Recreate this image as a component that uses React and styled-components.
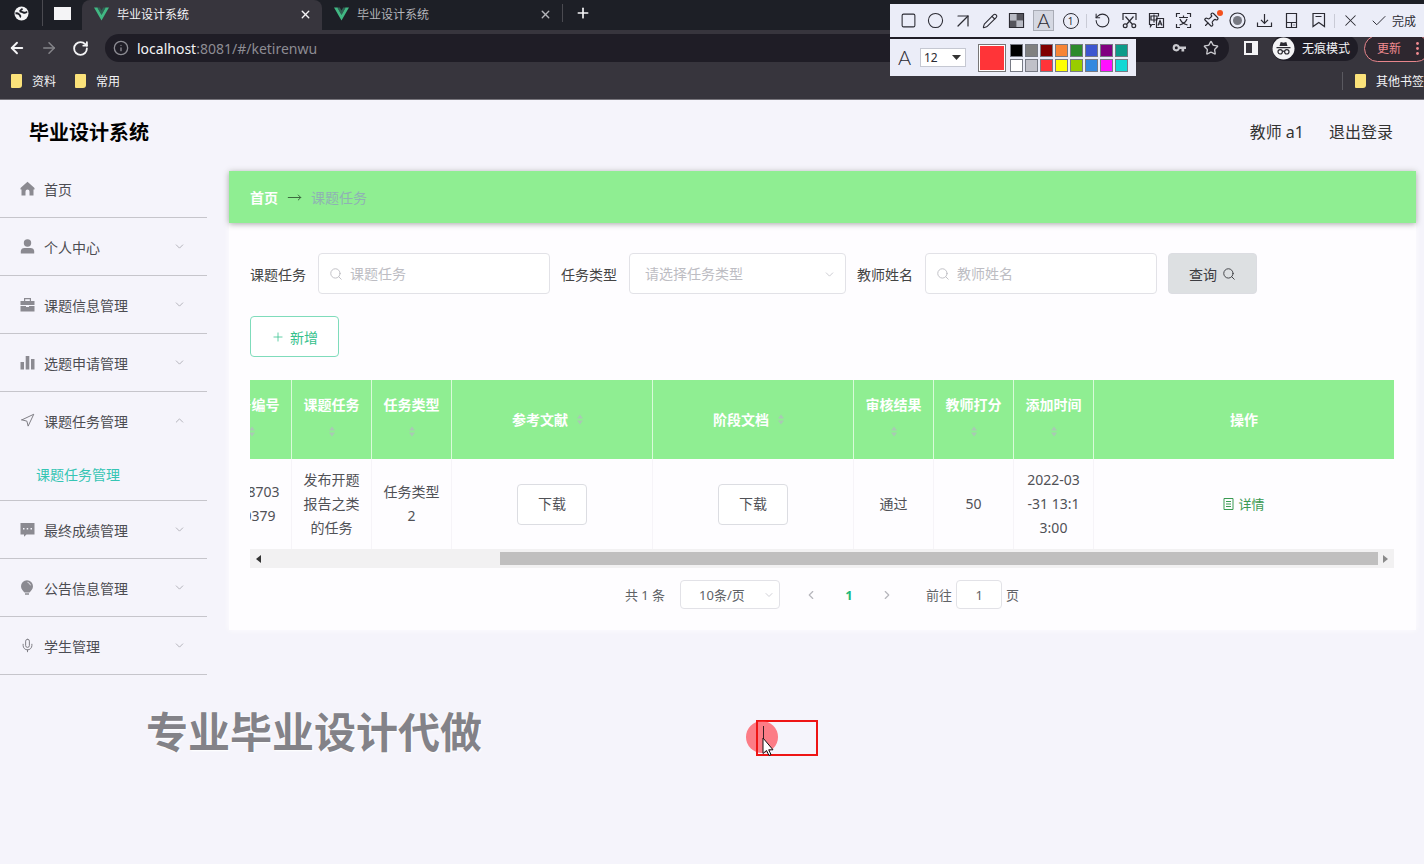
import styled, { createGlobalStyle } from 'styled-components';
import {
    Square, Circle, ArrowUpRight, Pencil, RotateCcw, Pin, X, Check,
    ArrowLeft, ArrowRight, RotateCw, Info, Star, Plus, Navigation, Mic, Search,
    ChevronDown, ChevronUp, ChevronLeft, ChevronRight, MoveRight
} from 'lucide-react';

const GlobalStyle = createGlobalStyle`
    * {
        box-sizing: border-box;
    }

    body {
        margin: 0;
        background: #f5f4fb;
        color: #505156;
        font-family: "Noto Sans", "Noto Sans CJK SC", sans-serif;
        font-size: 14px;
        overflow: hidden;
    }

    button, input, select {
        font: inherit;
        color: inherit;
        margin: 0;
    }

    button {
        cursor: pointer;
    }

    a {
        color: inherit;
        text-decoration: none;
    }

    svg {
        display: block;
        flex: none;
    }
`

const Page = styled.div`
    position: relative;
    min-height: 100vh;
`

/* ---------- browser ---------- */

const Browser = styled.div`
    background: #37353d;
    color: #f4f4f6;
    font-size: 12px;
    border-bottom: 1px solid #77757c;
    overflow: hidden;
`

const TabStrip = styled.div`
    display: flex;
    height: 30px;
    background: #1d1f26;
`

const PinnedTab = styled.div`
    display: flex;
    align-items: center;
    justify-content: center;
    width: ${props => props.$wide ? '39px' : '43px'};
    height: 26px;
    border-right: 1px solid ${props => props.$wide ? 'transparent' : '#4a4a50'};
`

const Tab = styled.div`
    display: flex;
    align-items: center;
    gap: 8px;
    width: 240px;
    height: 30px;
    padding: 0 10px 2px 12px;
    border-radius: 8px 8px 0 0;
    background: ${props => props.$active ? '#37353d' : 'transparent'};
    color: ${props => props.$active ? '#f4f4f6' : '#b4b5ba'};
`

const TabTitle = styled.span`
    flex: 1;
`

const PlainButton = styled.button`
    display: flex;
    align-items: center;
    justify-content: center;
    padding: 0;
    border: 0;
    background: none;
    color: ${props => props.$dim ? '#85858a' : 'inherit'};
`

const NewTab = styled.div`
    display: flex;
    align-items: center;
    height: 18px;
    margin-top: 4px;
    padding-left: 12px;
    border-left: 1px solid #4a4a50;
`

const NavRow = styled.div`
    display: flex;
    align-items: center;
    height: 36px;
    padding-left: 8px;
`

const NavButtons = styled.div`
    display: flex;
    gap: 14px;
    width: 97px;
`

const AddressBar = styled.div`
    display: flex;
    flex: 1;
    align-items: center;
    gap: 8px;
    height: 28px;
    padding: 0 10px 0 8px;
    border-radius: 14px;
    background: #1f1d26;
    color: #8d8c93;
    font-size: 14px;
`

const Url = styled.div`
    flex: 1;

    b {
        font-weight: 400;
        color: #f4f4f6;
    }
`

const AddressIcons = styled.div`
    display: flex;
    align-items: center;
    gap: 16px;
    color: #c9c9ce;
`

const PanelIcon = styled.div`
    width: 14px;
    height: 14px;
    margin: 0 14px 0 15px;
    border: 2px solid #f4f4f6;
    border-right-width: 6px;
`

const Incognito = styled.div`
    display: flex;
    align-items: center;
    gap: 7px;
    height: 26px;
    padding-right: 8px;
    border-radius: 13px;
    background: #1f1d26;
    white-space: nowrap;
`

const UpdateButton = styled.button`
    display: flex;
    flex: none;
    align-items: center;
    justify-content: space-between;
    width: 66px;
    height: 27px;
    margin: 0 -6px 0 6px;
    padding: 0 10px 0 12px;
    border: 1px solid #e7868c;
    border-radius: 14px;
    background: #2e272f;
    color: #f28b90;
`

const Bookmarks = styled.div`
    display: flex;
    align-items: center;
    height: 33px;
    padding: 0 0 4px 11px;
    gap: 19px;
`

const BookmarkLink = styled.a`
    display: flex;
    align-items: center;
    gap: 10px;
    white-space: nowrap;
`

const OtherBookmarks = styled.div`
    display: flex;
    margin-left: auto;
    padding-left: 12px;
    border-left: 1px solid #5a5960;
`

const Folder = styled.span`
    width: 11px;
    height: 14px;
    border-radius: 1px 1px 3px 1px;
    background: #fbe27a;
`

/* ---------- capture toolbar, floats over the browser ---------- */

const Capture = styled.div`
    position: absolute;
    top: 4px;
    right: 0;
    width: 534px;
    color: #2b2b33;
    font-size: 12px;
`

const ToolRow = styled.div`
    display: flex;
    align-items: center;
    height: 33px;
    padding-left: 5px;
    background: #ebedf8;
    overflow: hidden;
`

const ToolButton = styled.button`
    position: relative;
    display: flex;
    flex: none;
    align-items: center;
    justify-content: center;
    gap: 4px;
    width: ${props => props.$wide ? '58px' : '27px'};
    height: 21px;
    padding: 0;
    border: 0;
    background: none;
    white-space: nowrap;
`

const ToolLine = styled.span`
    flex: none;
    width: 1px;
    height: 14px;
    margin: 0 2px;
    background: #c9cbd6;
`

const LetterA = styled.span`
    width: 21px;
    height: 21px;
    background: ${props => props.$on ? '#d5d8e2' : 'none'};
    box-shadow: ${props => props.$on ? 'inset 0 0 0 1px #a9acb6' : 'none'};
    font-family: Lato, sans-serif;
    font-weight: 300;
    font-size: 20px;
    line-height: 21px;
    text-align: center;
`

const Numbered = styled.span`
    width: 16px;
    height: 16px;
    border: 1px solid #2b2b33;
    border-radius: 50%;
    font-size: 10px;
    line-height: 14px;
    text-align: center;
`

const RedDot = styled.span`
    position: absolute;
    top: 0;
    right: 1px;
    width: 6px;
    height: 6px;
    border-radius: 50%;
    background: #f4511e;
`

const StyleRow = styled.div`
    display: flex;
    align-items: center;
    width: 246px;
    height: 37px;
    margin-top: 2px;
    padding-left: 4px;
    background: #ebedf8;
`

const SizeBox = styled.div`
    position: relative;
    margin: 0 12px 0 5px;

    svg {
        position: absolute;
        top: 7px;
        right: 5px;
        pointer-events: none;
    }
`

const SizeSelect = styled.select`
    display: block;
    width: 46px;
    height: 19px;
    padding: 0 3px;
    border: 1px solid #c5c8d2;
    border-radius: 0;
    background: #fff;
    line-height: 17px;
    appearance: none;
`

const CurrentColor = styled.span`
    width: 28px;
    height: 28px;
    border: 1px solid #777;
    outline: 1px solid #fff;
    outline-offset: -2px;
    background: #ff3438;
`

const Swatches = styled.div`
    display: grid;
    grid-template-columns: repeat(8, 13px);
    gap: 2px;
    margin-left: 4px;
`

const Swatch = styled.button`
    width: 13px;
    height: 13px;
    padding: 0;
    border: 1px solid #777a84;
    background: ${props => props.$color};
`

/* ---------- application ---------- */

const Header = styled.header`
    display: flex;
    align-items: center;
    justify-content: space-between;
    height: 60px;
    padding: 2px 31px 0 29px;
    font-size: 16px;
    color: #333;
`

const Title = styled.h1`
    margin: 0;
    font-size: 20px;
    font-weight: 700;
    color: #000;
`

const HeaderLinks = styled.div`
    display: flex;
    gap: 25px;
`

const Body = styled.div`
    display: flex;
    align-items: flex-start;
`

const Sidebar = styled.nav`
    flex: none;
    width: 207px;
`

const MenuGroup = styled.div`
    border-bottom: 1px solid #c6c5cb;
`

const MenuItem = styled.a`
    display: flex;
    align-items: center;
    gap: 9px;
    height: 57px;
    padding: 0 21px 0 20px;
    color: #4c4c52;
`

const MenuLabel = styled.span`
    flex: 1;
`

const SubItem = styled.a`
    display: block;
    padding-left: 36px;
    line-height: 51px;
    color: #36c5b4;
`

const Main = styled.main`
    flex: 1;
    min-width: 0;
    margin: 11px 8px 0 22px;
    background: #fefdff;
    box-shadow: 0 0 6px #fefdff;
`

const Breadcrumb = styled.div`
    display: flex;
    align-items: center;
    gap: 9px;
    height: 52px;
    padding: 0 21px;
    background: #8fee92;
    box-shadow: 0 1px 6px rgba(0, 0, 0, .35);
    color: #8fb2b4;

    a {
        color: #fff;
        font-weight: 700;
    }
`

const Content = styled.div`
    padding: 30px 22px 21px 21px;
`

const Filters = styled.form`
    display: flex;
    align-items: center;
    gap: 11px;
`

const Field = styled.div`
    display: flex;
    align-items: center;
    gap: 12px;
    white-space: nowrap;

    label {
        color: #444;
    }
`

const InputBox = styled.div`
    display: flex;
    align-items: center;
    gap: 7px;
    width: 232px;
    height: 41px;
    padding: 0 10px;
    border: 1px solid #e2e2e7;
    border-radius: 4px;
    background: #fff;
    color: #bdbdc3;

    input {
        flex: 1;
        min-width: 0;
        padding: 0;
        border: 0;
        outline: 0;
        background: none;
    }

    input::placeholder {
        color: #bdbdc3;
        opacity: 1;
    }
`

const SelectBox = styled.div`
    position: relative;
    width: ${props => props.$small ? '100px' : '217px'};
    color: ${props => props.$small ? '#606266' : '#bdbdc3'};

    select {
        display: block;
        width: 100%;
        height: ${props => props.$small ? '29px' : '41px'};
        padding: 0 ${props => props.$small ? '18px' : '15px'};
        border: 1px solid #e2e2e7;
        border-radius: 4px;
        background: #fff;
        appearance: none;
    }

    svg {
        position: absolute;
        top: 50%;
        right: ${props => props.$small ? '5px' : '10px'};
        margin-top: -6px;
        color: #c0c0c8;
        pointer-events: none;
    }
`

const Button = styled.button`
    display: flex;
    align-items: center;
    justify-content: center;
    gap: 5px;
    height: 41px;
    padding: 0 20px;
    border: 1px solid ${props => props.$border || '#dcdde2'};
    border-radius: 4px;
    background: ${props => props.$fill || '#fff'};
    color: ${props => props.$color || '#505156'};
    white-space: nowrap;
`

const Actions = styled.div`
    display: flex;
    margin: 22px 0 23px;
`

/* keeps the right end of the wide table in view */
const TableScroll = styled.div`
    display: flex;
    justify-content: flex-end;
    overflow: hidden;
`

const Table = styled.table`
    flex: none;
    width: calc(100% + 38px);
    border-collapse: separate;
    border-spacing: 0;
    table-layout: fixed;
    text-align: center;
    line-height: 24px;
    word-break: break-all;

    th {
        height: 79px;
        padding: 0 11px;
        border-right: 1px solid #d9fbd9;
        background: #8fee92;
        color: #fff;
        font-weight: 700;
    }

    td {
        height: 90px;
        padding: 0 11px;
        border-right: 1px solid #f6f4f8;
    }

    th:last-child, td:last-child {
        border-right: 0;
    }
`

const HeadCell = styled.div`
    display: flex;
    flex-wrap: wrap;
    align-items: center;
    justify-content: center;
`

const SortMark = styled.span`
    display: flex;
    align-items: center;
    justify-content: center;
    width: 24px;
    height: 30px;
    color: #a9c9b4;
`

const Centered = styled.div`
    display: flex;
    justify-content: center;
`

const DetailButton = styled.button`
    display: inline-flex;
    align-items: center;
    gap: 4px;
    padding: 0;
    border: 0;
    background: none;
    color: #3a9a52;
    font-size: 13px;
`

const ScrollBar = styled.div`
    display: flex;
    align-items: center;
    height: 19px;
    padding: 0 6px;
    background: #f2f1f2;
`

const ScrollTrack = styled.div`
    display: flex;
    flex: 1;
    justify-content: flex-end;
    margin: 0 5px;
`

const ScrollThumb = styled.div`
    width: 79%;
    height: 13px;
    background: #c0bfbf;
`

const Pagination = styled.div`
    display: flex;
    align-items: center;
    justify-content: center;
    margin-top: 12px;
    font-size: 13px;
    color: #606266;
    white-space: nowrap;
`

const Total = styled.span`
    margin-right: 15px;
`

const Pager = styled.div`
    display: flex;
    align-items: center;
    justify-content: space-between;
    width: 90px;
    margin: 0 32px 0 24px;
    color: #b6b6bc;
`

const CurrentPage = styled.button`
    padding: 0;
    border: 0;
    background: none;
    color: #1fb97c;
    font-weight: 700;
`

const Jump = styled.label`
    display: flex;
    align-items: center;
    gap: 4px;

    input {
        width: 46px;
        height: 29px;
        padding: 0;
        border: 1px solid #e2e2e7;
        border-radius: 4px;
        background: #fff;
        text-align: center;
    }
`

/* ---------- things laid over the page ---------- */

const Watermark = styled.div`
    position: absolute;
    top: 702px;
    left: 146px;
    font-size: 42px;
    line-height: 60px;
    font-weight: 700;
    color: #838288;
    text-shadow: 0 0 2px #fff, 1px 1px 2px #fff;
`

const Mark = styled.div`
    position: absolute;
    top: 720px;
    left: 756px;
    width: 62px;
    height: 36px;
    border: 2px solid #ee1515;
`

const Pointer = styled.svg`
    position: absolute;
    top: 720px;
    left: 745px;
`

/* ---------- drawings ---------- */

const VueLogo = () => (
    <svg width="15" height="14" viewBox="0 0 15 14">
        <path d="M0 0.5h3.6L7.5 7.4 11.4 0.5H15L7.5 13.5z" fill="#41b883" />
        <path d="M3.2 0.5h2.6l1.7 3 1.7-3h2.6L7.5 7.9z" fill="#2f6153" />
    </svg>
)

const Globe = () => (
    <svg width="15" height="15" viewBox="0 0 15 15">
        <circle cx="7.5" cy="7.5" r="7" fill="#f4f4f6" />
        <path d="M1.500 7.500c2.500-.8 3 .7 4 1.200 1 .6.300 1.800 1.500 2.300M13 5.500c-1.500 2-3 1.300-4 .8-1.200-.6-3-.3-2.800-1.500.2-1 1.600-.6 2-2.300" fill="none" stroke="#1d1f26" strokeWidth="1.900" />
    </svg>
)

const Key = () => (
    <svg width="15" height="10" viewBox="0 0 15 10" fill="#c9c9ce">
        <path fillRule="evenodd" d="M4.300 1a3.700 3.700 0 1 0 3.500 5h1.700v2.500h2.700V6H14V3.500H7.800A3.700 3.700 0 0 0 4.300 1zm0 2.300a1.500 1.500 0 1 1 0 3 1.500 1.500 0 0 1 0-3z" />
    </svg>
)

const Spy = () => (
    <svg width="23" height="23" viewBox="0 0 23 23">
        <circle cx="11.500" cy="11.500" r="11" fill="#f4f4f6" />
        <path d="M7.500 9l1.200-4 2.800.8 2.800-.8 1.200 4zM4.500 10h14v1.200h-14z" fill="#2a2930" />
        <g fill="none" stroke="#2a2930" strokeWidth="1.200">
            <circle cx="8.200" cy="14.800" r="2.200" />
            <circle cx="14.800" cy="14.800" r="2.200" />
            <path d="M10.400 14.500q1.100-.8 2.200 0" />
        </g>
    </svg>
)

const Dots = () => (
    <svg width="3" height="13" viewBox="0 0 3 13" fill="#f28b90">
        <circle cx="1.500" cy="1.500" r="1.400" />
        <circle cx="1.500" cy="6.500" r="1.400" />
        <circle cx="1.500" cy="11.500" r="1.400" />
    </svg>
)

const Caret = ({ left, color = '#333' }) => (
    <svg width="5" height="8" viewBox="0 0 5 8" fill={color}>
        <path d={left ? 'M5 0v8L0 4z' : 'M0 0v8l5-4z'} />
    </svg>
)

const SelectCaret = () => (
    <svg width="9" height="5" viewBox="0 0 9 5"><path d="M0 0h9L4.500 5z" fill="#333" /></svg>
)

const ToolSvg = ({ children }) => (
    <svg width="17" height="17" viewBox="0 0 17 17" fill="none" stroke="#2b2b33" strokeWidth="1.200">{children}</svg>
)

const Mosaic = () => (
    <ToolSvg>
        <path d="M1.500 1.500h14v14h-14z" />
        <path d="M2 2h6.500v6.500H2zM8.500 8.500H15V15H8.500z" fill="#b9bbc5" stroke="none" />
        <path d="M8.500 2H15v6.500H8.500zM2 8.500h6.500V15H2z" fill="#55555d" stroke="none" />
    </ToolSvg>
)

const CutFrame = () => (
    <ToolSvg>
        <path d="M2 8V1.500h13V8M4.500 4.500l7 8M12.500 4.500l-7 8" />
        <circle cx="4.200" cy="13.800" r="1.900" />
        <circle cx="12.800" cy="13.800" r="1.900" />
    </ToolSvg>
)

const Translate = () => (
    <ToolSvg>
        <path d="M7 12.500H4l-1.500 2v-2H1.500v-11h9v3M3 4h6v4H3zM6 2.500v8M8.500 6.500h7v9h-7z" />
        <path d="M10 13.500l2-5 2 5M10.700 12h2.600" />
    </ToolSvg>
)

const ScanText = () => (
    <ToolSvg>
        <path d="M1.500 5V1.500H5M12 1.500h3.500V5M15.500 12v3.500H12M5 15.500H1.500V12M4 5.500h9M8.500 3.500v2M5 7c1 3 4 5 7.500 6M12 7c-1 3-4 5-7.500 6" />
    </ToolSvg>
)

const Recorder = () => (
    <ToolSvg>
        <circle cx="8.500" cy="8.500" r="7.500" />
        <circle cx="8.500" cy="8.500" r="4.500" fill="#777982" stroke="none" />
    </ToolSvg>
)

const Tray = () => (
    <ToolSvg><path d="M1.500 10.500v4h14v-4M8.500 2v9M5 7.800L8.500 11.300 12 7.800" /></ToolSvg>
)

const Device = () => (
    <ToolSvg><path d="M3.500 1.500h10v14h-10zM3.500 10.500h10M8.500 10.500v5M10.500 13h1" /></ToolSvg>
)

const Ribbon = () => (
    <ToolSvg><path d="M3 1.500h11.500v13L8.800 10.500 3 14.500zM5.500 4.500h6" /></ToolSvg>
)

const MenuSvg = ({ children }) => (
    <svg width="15" height="15" viewBox="0 0 15 15" fill="#8b8a91">{children}</svg>
)

const icons = {
    home: <MenuSvg><path d="M7.500.8L14.500 7v1.500H13.500V14.500H9.500v-4a2 2 0 0 0-4 0v4h-4V8.500H.5V7z" /></MenuSvg>,
    user: <MenuSvg><circle cx="7.500" cy="4" r="3.700" /><path d="M.8 14.500v-2.500q.4-3 3.700-3h6q3.300 0 3.700 3v2.500z" /></MenuSvg>,
    case: <MenuSvg><path d="M4 1h7v3h3.500v4h-14V4H4zm1.200 1.200V4h4.600V2.200z" fillRule="evenodd" /><path d="M.5 9H6v1h3V9h5.500v5.500H.5z" /></MenuSvg>,
    bars: <MenuSvg><path d="M.5 7h3.500v7.500H.5zM5.700 1h3.600v13.500H5.700zM11 4h3.500v10.500H11z" /></MenuSvg>,
    plane: <Navigation size={15} strokeWidth={1.5} color="#77767d" />,
    chat: <MenuSvg><path fillRule="evenodd" d="M.5 1h14v11.500H6.500L4 14.800v-2.300H.5zM3 6v1.500h1.500V6zm3.700 0v1.500h1.500V6zm3.800 0v1.500H12V6z" /></MenuSvg>,
    bulb: <MenuSvg><path d="M7 .2a6 6 0 0 1 6 6c0 3-2 4.300-3.500 6.300h-5C3 10.500 1 9.200 1 6.200a6 6 0 0 1 6-6zM5 13.300h4v1.500H5z" /><path d="M7.500 2.300q2.500.5 3 3" fill="none" stroke="#e4e3ea" /></MenuSvg>,
    mic: <Mic size={15} strokeWidth={1.500} color="#77767d" />
}

const tools = [
    { name: '矩形', icon: <Square size={17} strokeWidth={1.5} /> },
    { name: '椭圆', icon: <Circle size={17} strokeWidth={1.5} /> },
    { name: '箭头', icon: <ArrowUpRight size={24} strokeWidth={1.2} /> },
    { name: '画笔', icon: <Pencil size={16} strokeWidth={1.600} /> },
    { name: '马赛克', icon: <Mosaic /> },
    { name: '文字', icon: <LetterA $on>A</LetterA> },
    { name: '序号', icon: <Numbered>1</Numbered>, line: true },
    { name: '撤销', icon: <RotateCcw size={17} strokeWidth={1.5} /> },
    { name: '裁剪', icon: <CutFrame /> },
    { name: '翻译', icon: <Translate /> },
    { name: '识别', icon: <ScanText /> },
    { name: '固定', icon: <><svg width="17" height="17" viewBox="0 0 24 24"><g transform="rotate(45 12 12)"><Pin size={24} strokeWidth={1.600} /></g></svg><RedDot /></> },
    { name: '录制', icon: <Recorder /> },
    { name: '保存', icon: <Tray /> },
    { name: '发送', icon: <Device /> },
    { name: '收藏', icon: <Ribbon />, line: true },
    { name: '取消', icon: <X size={19} strokeWidth={1.300} /> }
]

const swatches = [
    '#000000', '#808080', '#800000', '#f78536', '#2d8a2d', '#3d56d0', '#800080', '#0d9b8a',
    '#ffffff', '#c0c0c8', '#ff3438', '#ffff00', '#99cc00', '#3388e0', '#ff10ff', '#12d8d4'
]

const menu = [
    { label: '首页', icon: 'home', leaf: true },
    { label: '个人中心', icon: 'user' },
    { label: '课题信息管理', icon: 'case' },
    { label: '选题申请管理', icon: 'bars' },
    { label: '课题任务管理', icon: 'plane', sub: '课题任务管理' },
    { label: '最终成绩管理', icon: 'chat' },
    { label: '公告信息管理', icon: 'bulb' },
    { label: '学生管理', icon: 'mic' }
]

const columns = [
    { name: '任务编号', width: 80 },
    { name: '课题任务', width: 80 },
    { name: '任务类型', width: 80 },
    { name: '参考文献', width: 201 },
    { name: '阶段文档', width: 201 },
    { name: '审核结果', width: 80 },
    { name: '教师打分', width: 80 },
    { name: '添加时间', width: 80 }
]

function BrowserBar() {
    return (
        <Browser>
            <TabStrip>
                <PinnedTab><Globe /></PinnedTab>
                <PinnedTab $wide>
                    <svg width="17" height="13" viewBox="0 0 17 13"><path d="M0 0h17v13H0z" fill="#f4f4f6" /></svg>
                </PinnedTab>
                <Tab $active>
                    <VueLogo />
                    <TabTitle>毕业设计系统</TabTitle>
                    <PlainButton aria-label="关闭"><X size={13} strokeWidth={2.500} /></PlainButton>
                </Tab>
                <Tab>
                    <VueLogo />
                    <TabTitle>毕业设计系统</TabTitle>
                    <PlainButton aria-label="关闭"><X size={13} strokeWidth={2.500} /></PlainButton>
                </Tab>
                <NewTab>
                    <PlainButton aria-label="新标签页"><Plus size={16} strokeWidth={2.500} /></PlainButton>
                </NewTab>
            </TabStrip>
            <NavRow>
                <NavButtons>
                    <PlainButton aria-label="后退"><ArrowLeft size={18} strokeWidth={2.500} /></PlainButton>
                    <PlainButton aria-label="前进" $dim><ArrowRight size={18} strokeWidth={2} /></PlainButton>
                    <PlainButton aria-label="刷新"><RotateCw size={17} strokeWidth={2.600} /></PlainButton>
                </NavButtons>
                <AddressBar>
                    <Info size={16} strokeWidth={2} />
                    <Url><b>localhost</b>:8081/#/ketirenwu</Url>
                    <AddressIcons>
                        <Key />
                        <Star size={16} strokeWidth={2} />
                    </AddressIcons>
                </AddressBar>
                <PanelIcon />
                <Incognito><Spy />无痕模式</Incognito>
                <UpdateButton>更新<Dots /></UpdateButton>
            </NavRow>
            <Bookmarks>
                <BookmarkLink href="#"><Folder />资料</BookmarkLink>
                <BookmarkLink href="#"><Folder />常用</BookmarkLink>
                <OtherBookmarks>
                    <BookmarkLink href="#"><Folder />其他书签</BookmarkLink>
                </OtherBookmarks>
            </Bookmarks>
        </Browser>
    )
}

function CaptureBar() {
    return (
        <Capture>
            <ToolRow>
                {
                    tools.map(tool => [
                        <ToolButton key={tool.name} aria-label={tool.name}>{tool.icon}</ToolButton>,
                        tool.line && <ToolLine key={tool.name + '-line'} />
                    ])
                }
                <ToolButton $wide><Check size={18} strokeWidth={1.300} />完成</ToolButton>
            </ToolRow>
            <StyleRow>
                <LetterA>A</LetterA>
                <SizeBox>
                    <SizeSelect aria-label="字号"><option>12</option></SizeSelect>
                    <SelectCaret />
                </SizeBox>
                <CurrentColor />
                <Swatches>
                    {swatches.map(color => <Swatch key={color} $color={color} aria-label={color} />)}
                </Swatches>
            </StyleRow>
        </Capture>
    )
}

function SideMenu() {
    return (
        <Sidebar>
            {
                menu.map(item => (
                    <MenuGroup key={item.label}>
                        <MenuItem href="#">
                            {icons[item.icon]}
                            <MenuLabel>{item.label}</MenuLabel>
                            {!item.leaf && (item.sub
                                ? <ChevronUp size={13} strokeWidth={1.500} color="#a5a5ad" />
                                : <ChevronDown size={13} strokeWidth={1.500} color="#a5a5ad" />)}
                        </MenuItem>
                        {item.sub && <SubItem href="#">{item.sub}</SubItem>}
                    </MenuGroup>
                ))
            }
        </Sidebar>
    )
}

function TaskTable() {
    return (
        <>
            <TableScroll>
                <Table>
                    <colgroup>
                        {columns.map(col => <col key={col.name} width={col.width} />)}
                        <col />
                    </colgroup>
                    <thead>
                        <tr>
                            {
                                columns.map(col => (
                                    <th key={col.name}>
                                        <HeadCell>
                                            {col.name}
                                            <SortMark>
                                                <svg width="6" height="11" viewBox="0 0 6 11" fill="currentColor">
                                                    <path d="M0 4.500L3 0.500 6 4.500zM0 6.500h6L3 10.500z" />
                                                </svg>
                                            </SortMark>
                                        </HeadCell>
                                    </th>
                                ))
                            }
                            <th>操作</th>
                        </tr>
                    </thead>
                    <tbody>
                        <tr>
                            <td>1648703580379</td>
                            <td>发布开题报告之类的任务</td>
                            <td>任务类型2</td>
                            <td><Centered><Button>下载</Button></Centered></td>
                            <td><Centered><Button>下载</Button></Centered></td>
                            <td>通过</td>
                            <td>50</td>
                            <td>2022-03-31 13:13:00</td>
                            <td>
                                <DetailButton>
                                    <svg width="11" height="12" viewBox="0 0 11 12" fill="none" stroke="currentColor">
                                        <path d="M1 .5h9v11H1zM3 3.500h5M3 6h5M3 8.500h5" />
                                    </svg>
                                    详情
                                </DetailButton>
                            </td>
                        </tr>
                    </tbody>
                </Table>
            </TableScroll>
            <ScrollBar>
                <Caret left />
                <ScrollTrack><ScrollThumb /></ScrollTrack>
                <Caret color="#8a8a8a" />
            </ScrollBar>
        </>
    )
}

export default function App() {
    return (
        <Page>
            <GlobalStyle />
            <BrowserBar />
            <CaptureBar />
            <Header>
                <Title>毕业设计系统</Title>
                <HeaderLinks>
                    <span>教师 a1</span>
                    <a href="#">退出登录</a>
                </HeaderLinks>
            </Header>
            <Body>
                <SideMenu />
                <Main>
                    <Breadcrumb>
                        <a href="#">首页</a>
                        <MoveRight size={15} strokeWidth={1.600} color="#3d6b40" />
                        <span>课题任务</span>
                    </Breadcrumb>
                    <Content>
                        <Filters>
                            <Field>
                                <label htmlFor="task">课题任务</label>
                                <InputBox>
                                    <Search size={14} strokeWidth={1.600} />
                                    <input id="task" placeholder="课题任务" />
                                </InputBox>
                            </Field>
                            <Field>
                                <label htmlFor="type">任务类型</label>
                                <SelectBox>
                                    <select id="type"><option>请选择任务类型</option></select>
                                    <ChevronDown size={13} strokeWidth={1.500} />
                                </SelectBox>
                            </Field>
                            <Field>
                                <label htmlFor="teacher">教师姓名</label>
                                <InputBox>
                                    <Search size={14} strokeWidth={1.600} />
                                    <input id="teacher" placeholder="教师姓名" />
                                </InputBox>
                            </Field>
                            <Button type="button" $fill="#dde0e2" $color="#3c3d42">
                                查询<Search size={14} strokeWidth={1.600} />
                            </Button>
                        </Filters>
                        <Actions>
                            <Button $border="#7fdcbb" $color="#34c18c">
                                <Plus size={14} strokeWidth={1.300} />新增
                            </Button>
                        </Actions>
                        <TaskTable />
                        <Pagination>
                            <Total>共 1 条</Total>
                            <SelectBox $small>
                                <select aria-label="每页条数"><option>10条/页</option></select>
                                <ChevronDown size={12} strokeWidth={1.500} />
                            </SelectBox>
                            <Pager>
                                <PlainButton aria-label="上一页"><ChevronLeft size={14} strokeWidth={2} /></PlainButton>
                                <CurrentPage>1</CurrentPage>
                                <PlainButton aria-label="下一页"><ChevronRight size={14} strokeWidth={2} /></PlainButton>
                            </Pager>
                            <Jump>前往<input defaultValue="1" />页</Jump>
                        </Pagination>
                    </Content>
                </Main>
            </Body>
            <Watermark>专业毕业设计代做</Watermark>
            <Mark />
            <Pointer width="34" height="36" viewBox="0 0 34 36">
                <circle cx="17" cy="17" r="16" fill="#ff3c46" fillOpacity=".65" />
                <path d="M12 0v36" stroke="#ee1515" strokeWidth="2" />
                <path d="M18.500 6v14" stroke="#3a2025" />
                <path d="M18 18v15.500l3.500-3 2.500 5 2-1-2.300-4.700h4.300z" fill="#fff" stroke="#111" />
            </Pointer>
        </Page>
    )
}
